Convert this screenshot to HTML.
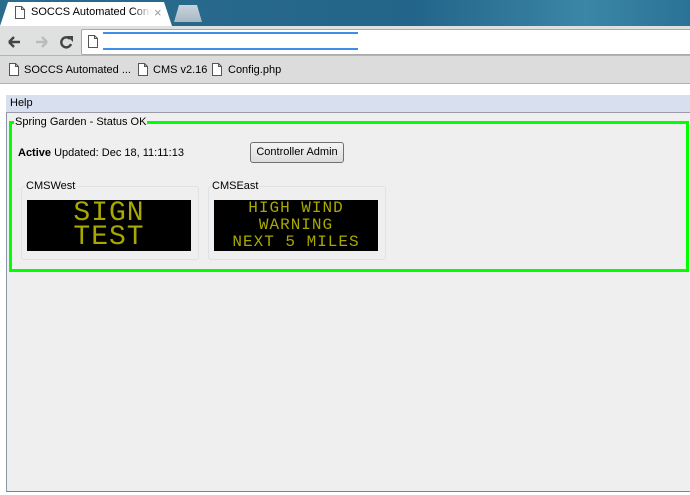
<!DOCTYPE html>
<html><head><meta charset="utf-8"><style>
*{margin:0;padding:0;box-sizing:border-box}
body{width:690px;height:495px;background:#fff;font-family:"Liberation Sans",sans-serif;font-size:12px;color:#000;position:relative;overflow:hidden}
.abs{position:absolute}
#tabbar{left:0;top:0;width:690px;height:26px;background:linear-gradient(90deg,#2b6c8d,#23658a 60%,#3b86a6 85%,#2a7296);}
#tab{left:0;top:2px;width:172px;height:24px;background:#fff;clip-path:polygon(0 100%,8px 0,164px 0,172px 100%)}
#tab2{left:174px;top:5px;width:28px;height:17px;background:linear-gradient(#c8d4dc,#a7b8c4);clip-path:polygon(0 100%,5px 0,23px 0,28px 100%)}
#toolbar{left:0;top:26px;width:690px;height:29px;background:#dfe0e0}
#omni{left:81px;top:29px;width:612px;height:26px;background:#fff;border:1px solid #a9a9a9;border-radius:2px}
#bm{left:0;top:55px;width:690px;height:29px;background:#dcdcdc;border-top:1px solid #b4b4b4;border-bottom:1px solid #b0b0b8}
.pg{width:10px;height:13px;display:inline-block}
#menu{left:6px;top:95px;width:684px;height:18px;background:#d8dfef;border-bottom:1px solid #9a9aa8;font-size:11px;padding:2px 4px}
#content{left:6px;top:113px;width:684px;height:379px;background:#efefef;border-left:1px solid #8a96a8;border-bottom:1px solid #7a8698}
#green{left:9px;top:121px;width:680px;height:151px;border:3px solid #00ff00}
.leg{background:#efefef;font-size:11px;padding:0 1px}
.grp{border:1px solid #dde2e6;border-radius:3px;width:178px;height:74px}
.disp{background:#000;color:#a8a800;font-family:"Liberation Mono",monospace;text-align:center;overflow:hidden;text-shadow:0 0 0 #000}
.bt{font-size:11px;top:64px}
</style></head><body>
<svg width="0" height="0" style="position:absolute"><defs><symbol id="p" viewBox="0 0 10 13"><path d="M0.5 0.5H6.5L9.5 3.5V12.5H0.5Z M6.5 0.5V3.5H9.5" fill="#fff" stroke="#555"/></symbol></defs></svg>
<div id="tabbar" class="abs"></div>
<div id="tab" class="abs"></div>
<svg class="abs pg" style="left:15px;top:6px"><use href="#p"/></svg>
<div class="abs" style="left:31px;top:6px;font-size:11px;width:120px;overflow:hidden;white-space:nowrap;-webkit-mask-image:linear-gradient(90deg,#000 85%,transparent)">SOCCS Automated Control</div>
<div class="abs" style="left:154px;top:5px;color:#999;font-size:13px">×</div>
<div id="tab2" class="abs"></div>
<div id="toolbar" class="abs"></div>
<svg class="abs" style="left:7px;top:34px" width="70" height="16">
<path d="M2 8H13M2 8L7 3M2 8L7 13" stroke="#444" stroke-width="2.4" fill="none"/>
<path d="M40 8H29M40 8L35 3M40 8L35 13" stroke="#bbb" stroke-width="2.4" fill="none"/>
<path d="M63 5A5 5 0 1 0 64 10" stroke="#444" stroke-width="2.4" fill="none"/><path d="M60 2L66 2L66 8Z" fill="#444"/>
</svg>
<div id="omni" class="abs"></div>
<svg class="abs pg" style="left:88px;top:35px"><use href="#p"/></svg>
<div class="abs" style="left:103px;top:32px;width:255px;height:2px;background:#3c8ee8"></div>
<div class="abs" style="left:103px;top:48px;width:255px;height:2px;background:#3c8ee8"></div>
<div id="bm" class="abs"></div>
<svg class="abs pg" style="left:9px;top:63px"><use href="#p"/></svg>
<div class="abs bt" style="left:24px">SOCCS Automated ...</div>
<svg class="abs pg" style="left:138px;top:63px"><use href="#p"/></svg>
<div class="abs bt" style="left:153px">CMS v2.16</div>
<svg class="abs pg" style="left:212px;top:63px"><use href="#p"/></svg>
<div class="abs bt" style="left:228px">Config.php</div>
<div id="menu" class="abs">Help</div>
<div id="content" class="abs"></div>
<div id="green" class="abs"></div>
<div class="abs leg" style="left:14px;top:116px">Spring Garden - Status OK</div>
<div class="abs" style="left:18px;top:147px;font-size:11px"><b>Active</b> Updated: Dec 18, 11:11:13</div>
<div class="abs" style="left:250px;top:142px;width:94px;height:21px;border:1px solid #707070;border-radius:3px;background:linear-gradient(#f4f4f4,#dcdcdc);font-size:11px;text-align:center;line-height:19px">Controller Admin</div>
<div class="abs grp" style="left:21px;top:186px"></div>
<div class="abs leg" style="left:25px;top:180px">CMSWest</div>
<div class="abs disp" style="left:27px;top:200px;width:164px;height:51px;font-size:28px;line-height:24px;letter-spacing:1px;padding-top:2px">SIGN<br>TEST</div>
<div class="abs grp" style="left:208px;top:186px"></div>
<div class="abs leg" style="left:211px;top:180px">CMSEast</div>
<div class="abs disp" style="left:214px;top:200px;width:164px;height:51px;font-size:16px;line-height:17px;letter-spacing:1px">HIGH WIND<br>WARNING<br>NEXT 5 MILES</div>
</body></html>
